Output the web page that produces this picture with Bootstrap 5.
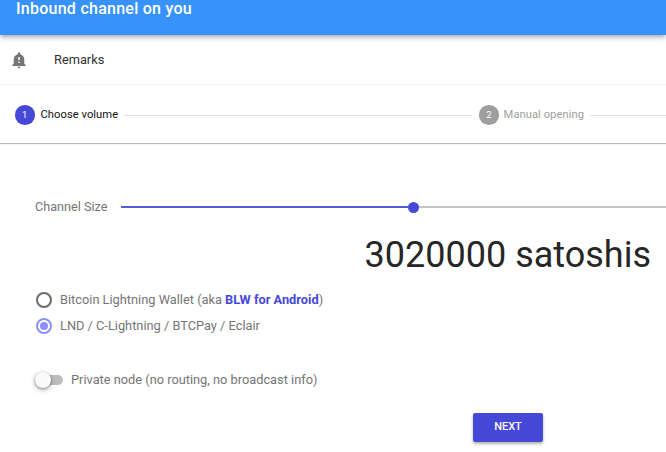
<!DOCTYPE html>
<html lang="en">
<head>
<meta charset="utf-8">
<title>Inbound channel</title>
<link href="https://cdn.jsdelivr.net/npm/bootstrap@5.3.0/dist/css/bootstrap.min.css" rel="stylesheet">
<style>
html,body{width:666px;height:452px;overflow:hidden;background:#fff;font-family:Roboto,sans-serif}
.top-bar{height:35px;background:#3792fc;color:#fff;font-size:16px;font-weight:500;line-height:17px;padding-left:16px;letter-spacing:.26px;box-shadow:0 2px 4px -1px rgba(0,0,0,.3),0 4px 5px rgba(0,0,0,.12);position:relative}
.remark-row{height:50px;padding-left:10px;padding-top:1px;font-size:12.8px;color:#333;border-bottom:1px solid #f5f5f5}
.remark-row svg{width:18px;height:18px;fill:#757575}
.remark-label{margin-left:26px}
.stepper{height:58px;padding-left:15px;padding-top:2px;box-shadow:0 1px 1px 0 rgba(0,0,0,.28);position:relative}
.step-dot{width:19.5px;height:19.5px;border-radius:50%;color:#fff;font-size:9.5px;flex:none}
.dot-on{background:#4649d8}
.dot-off{background:#9e9e9e}
.step-on{color:#111;margin-left:6px;font-size:11.2px;letter-spacing:.05px}
.step-off{color:#9e9e9e;margin-left:5px;font-size:11.2px;letter-spacing:.05px}
.step-line{height:1px;background:#e0e0e0;flex:1 1 0;margin:0 7px 0 6px}
.line-end{margin:0 0 0 6px;flex:none;width:76px}
.slider-row{margin-top:55px;padding-left:35px;height:18px;font-size:12.65px;color:#757575}
.slider-name{width:86px;flex:none}
.fill-a{height:2px;width:287px;background:#5658da;flex:none}
.knob{width:11px;height:11px;border-radius:50%;background:#4649d8;flex:none}
.fill-b{height:2px;background:#c4c4c4;flex:1 1 0}
.amount{font-size:36px;line-height:40px;color:#262626;text-align:right;padding-right:15px;margin-top:19px}
.choices{margin-top:12px;padding-left:36px;font-size:12.8px;color:#757575}
.choice{height:26px}
.ring{width:16px;height:16px;border-radius:50%;border:2px solid #6b6b6b;flex:none;margin-right:8px}
.ring-on{border-color:#8c8ffc}
.ring-on::after{content:"";width:8px;height:8px;border-radius:50%;background:#8c8ffc}
.choice b{color:#4649d8;font-weight:700}
.toggle-row{margin-top:31px;padding-left:35px;font-size:12.8px;color:#757575;height:20px}
.toggle-track{width:28px;height:10px;border-radius:5px;background:#bdbdbd;position:relative;flex:none;margin-right:8px}
.toggle-thumb{position:absolute;left:0;top:-3px;width:16px;height:16px;border-radius:50%;background:#fafafa;box-shadow:0 1px 3px rgba(0,0,0,.4),0 2px 6px rgba(0,0,0,.2)}
.next-wrap{margin-top:23px;padding-left:473px}
.next-btn{width:70px;height:29px;padding:0;background:#4649d8;border:0;border-radius:2px;color:#fff;font-size:11px;font-weight:500;box-shadow:0 2px 3px rgba(0,0,0,.3)}
.next-btn:hover{background:#4649d8;color:#fff}
</style>
</head>
<body>
<div class="top-bar">Inbound channel on you</div>
<div class="remark-row d-flex align-items-center">
<svg viewBox="0 0 24 24"><path d="M12 23c1.1 0 1.99-.89 1.99-2h-3.98c0 1.11.89 2 1.99 2zm7-6v-6c0-3.35-2.36-6.15-5.5-6.83V3c0-.83-.67-1.5-1.5-1.5s-1.5.67-1.5 1.5v1.17C7.36 4.85 5 7.65 5 11v6l-2 2v1h18v-1l-2-2zm-6-1h-2v-2h2v2zm0-4h-2V8h2v4z"/></svg>
<span class="remark-label">Remarks</span>
</div>
<div class="stepper d-flex align-items-center">
<span class="step-dot dot-on d-flex align-items-center justify-content-center">1</span>
<span class="step-on">Choose volume</span>
<span class="step-line"></span>
<span class="step-dot dot-off d-flex align-items-center justify-content-center">2</span>
<span class="step-off">Manual opening</span>
<span class="step-line line-end"></span>
</div>
<div class="slider-row d-flex align-items-center">
<span class="slider-name">Channel Size</span>
<span class="fill-a"></span><span class="knob"></span><span class="fill-b"></span>
</div>
<div class="amount">3020000 satoshis</div>
<div class="choices">
<div class="choice d-flex align-items-center"><span class="ring"></span><span>Bitcoin Lightning Wallet (aka <b>BLW for Android</b>)</span></div>
<div class="choice d-flex align-items-center"><span class="ring ring-on d-flex align-items-center justify-content-center"></span><span>LND / C-Lightning / BTCPay / Eclair</span></div>
</div>
<div class="toggle-row d-flex align-items-center"><span class="toggle-track"><span class="toggle-thumb"></span></span><span>Private node (no routing, no broadcast info)</span></div>
<div class="next-wrap"><button type="button" class="btn next-btn">NEXT</button></div>
<script src="https://cdn.jsdelivr.net/npm/bootstrap@5.3.0/dist/js/bootstrap.bundle.min.js"></script>
</body>
</html>
